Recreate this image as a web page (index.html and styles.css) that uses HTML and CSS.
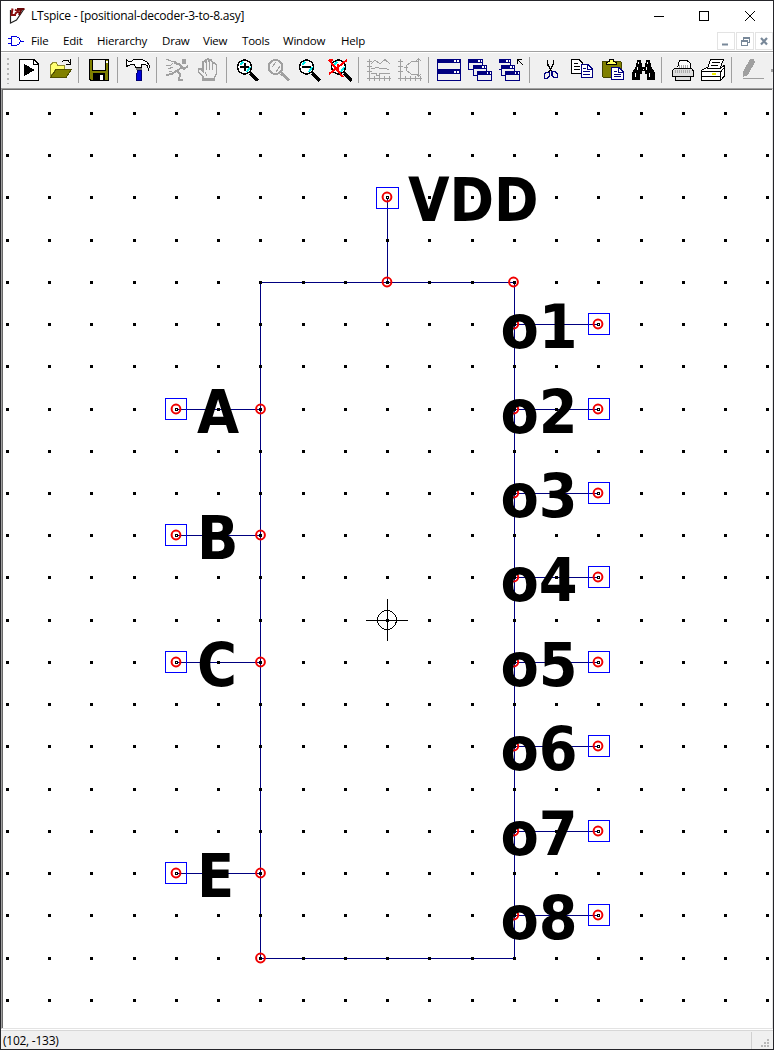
FILE: index.html
```html
<!DOCTYPE html>
<html lang="en">
<head>
<meta charset="utf-8">
<title>LTspice</title>
<link rel="stylesheet" href="styles.css">
</head>
<body>
<div class="window">
  <header class="titlebar">
    <svg class="app-icon" width="18" height="18" viewBox="0 0 18 18"><path d="M2.500 3V16L8.500 13L16 2" fill="#fff" stroke="#222" stroke-width="1.200"/><path d="M4.500 1.500L3.500 8H8M7 2.500L12 6M12 2L7 7" fill="none" stroke="#8a1010" stroke-width="2"/><path d="M9 2H16.500M13.500 2L11 8" fill="none" stroke="#6a0808" stroke-width="2"/></svg>
    <span class="title">LTspice - [positional-decoder-3-to-8.asy]</span>
    <svg class="caption" width="108" height="12" viewBox="0 0 108 12" fill="none" stroke="#000"><path d="M0 6.500H10M45.500 1.500H54.500V10.500H45.500Z" shape-rendering="crispEdges"/><path d="M91 1L101 11M101 1L91 11"/></svg>
  </header>
  <nav class="menubar">
    <svg class="gate" width="18" height="12" viewBox="0 0 18 12" fill="none" stroke="#0000e0" shape-rendering="crispEdges"><path d="M3.500 1.500H8L11 3L12.500 6L11 9L8 10.500H3.500ZM0 3.500H3M0 8.500H3M13 6.500H16"/></svg>
    <span>File</span><span>Edit</span><span>Hierarchy</span><span>Draw</span><span>View</span><span>Tools</span><span>Window</span><span>Help</span>
    <div class="mdi">
      <b><svg width="16" height="16"><path d="M4 11.500H10" stroke="#788899" stroke-width="2"/></svg></b>
      <b><svg width="16" height="16" fill="none" stroke="#788899" shape-rendering="crispEdges"><path d="M6.500 7V4.500H12.500V9.500H11M6 5.500H13M4.500 7.500H10.500V12.500H4.500ZM4 8.500H10"/></svg></b>
      <b><svg width="16" height="16"><path d="M5 5L11 11.500M11 5L5 11.500" stroke="#788899" stroke-width="2.200"/></svg></b>
    </div>
  </nav>
  <div class="toolbar">
    <i class="grip"></i>
    <svg class="ic" viewBox="0 0 24 24"><path d="M2.500 1.500H17L21.500 6V22.500H2.500Z" fill="#fff" stroke="#000"/><path d="M16.500 1.500V6.500H21.500" fill="none" stroke="#000"/><path d="M7 6L18 12L7 18Z"/></svg>
    <svg class="ic" viewBox="0 0 24 24"><path d="M2.500 18V7L5 4.500H8L10 7.500H16.500V11.500H8Z" fill="#ffff70" stroke="#908c30"/><path d="M2.500 19.500L8 11.500H23.500L18 19.500Z" fill="#808000" stroke="#505000"/><path d="M14 3.500L16 2.500H20L22 5M22.500 1V6.500H18" fill="none" stroke="#000"/></svg>
    <i class="sep"></i>
    <svg class="ic" viewBox="0 0 24 24"><path d="M2.500 1.500H21.500V22.500H4L2.500 21Z" fill="#808000" stroke="#000"/><path d="M5.500 1.500H18.500V12.500H5.500Z" fill="#f0f0f0" stroke="#000"/><path d="M6 15H18V22H6Z"/><path d="M13 17H16V22H13Z" fill="#fff"/><path d="M19 3H21V5H19Z" fill="#fff"/></svg>
    <i class="sep"></i>
    <svg class="ic" viewBox="0 0 24 24"><path d="M.500 2V8.500L5 6.500H8L10 9.500H15.500V6.500H19L21.500 8L22.500 11.500L23.500 8L21 4L16 1.500H8L5 3.500L2 3Z" fill="#fff" stroke="#000"/><path d="M10 10H16V12H10Z" fill="#777"/><path d="M11 12H15V15L16 22.500H10.500L11 15Z" fill="#0000d8" stroke="#000070"/></svg>
    <i class="sep"></i>
    <svg class="ic" viewBox="0 0 24 24" fill="none" stroke="#a0a0a0"><path d="M17 1H20V5H17Z" fill="#a0a0a0"/><path d="M9 5L14 6L17 9L12 13L15 16L14 22H18M11 13L7 16L1 17M16 8L19 11L23 8" stroke-width="2"/><path d="M1 1L6 3L11 4M1 7H6L8 5M3 11L8 9M4 14L7 13" stroke-width="1"/></svg>
    <svg class="ic" viewBox="0 0 24 24" fill="none" stroke="#a0a0a0"><path d="M7 22V19L2.500 14V11H5L7 13V4L9 3L10 4V2L12 1L13 2V3L15 2L16.500 4V5L18.500 5L20.500 7V16L18.500 19V22Z" stroke-width="1.500"/><path d="M10.500 3V12M13.500 3V12M16.500 4V12M9 14L11 18M8 20.500H18"/></svg>
    <i class="sep"></i>
    <svg class="ic" viewBox="0 0 24 24"><use href="#lens"/><path d="M5 9H14M9.500 5V13" stroke="#000" stroke-width="2"/></svg>
    <svg class="ic" viewBox="0 0 24 24" fill="none" stroke="#a0a0a0" stroke-width="2"><circle cx="9.500" cy="9" r="7"/><path d="M6 9L10 4M14 8L10 14" stroke-width="1"/><path d="M15 15L23 22.500" stroke-width="3"/></svg>
    <svg class="ic" viewBox="0 0 24 24"><use href="#lens"/><path d="M5 9H14" stroke="#000" stroke-width="2"/></svg>
    <svg class="ic" viewBox="0 0 24 24"><use href="#lens" x="1"/><path d="M1 2L15 19M19 2L1 16M1 2H5M10 6V12" stroke="#f00" stroke-width="2" fill="none"/></svg>
    <i class="sep"></i>
    <svg class="ic" viewBox="0 0 24 24" fill="none" stroke="#a0a0a0"><path d="M2.500 1V23M0 20.500H24M0 3.500H5M0 8.500H5M0 13.500H5M7.500 18V23M12.500 18V23M17.500 18V23M22.500 18V23M4 6L8 2L13 6L18 1.500L23 6M4 10H8L10 9L14 11L18 10L22 12M4 15.500H9V17.500H12V15.500H23"/></svg>
    <svg class="ic" viewBox="0 0 24 24" fill="none" stroke="#a0a0a0"><path d="M2.500 1V23M0 20.500H24M0 3.500H5M0 8.500H5M0 13.500H5M7.500 18V23M12.500 18V23M17.500 18V23M22.500 18V23M20.500 1V18M18 3L20.500 1L23 3M18 16L20.500 18L23 16M20 3L13 4L8 8V12L13 16L20 17M6 9H10"/></svg>
    <i class="sep"></i>
    <svg class="ic" viewBox="0 0 24 24"><path d="M0 1H24V23H0Z" fill="#000080"/><path d="M1 5H23V11H1ZM1 16H23V22H1Z" fill="#f0f0f0"/><path d="M17 2H19V4H17ZM20 2H22V4H20ZM17 13H19V15H17ZM20 13H22V15H20Z" fill="#fff"/></svg>
    <svg class="ic" viewBox="0 0 24 24"><use href="#cascade"/></svg>
    <svg class="ic" viewBox="0 0 24 24"><use href="#cascade" x="-3"/><path d="M18 1.500H23M18.500 1V6M18 1L24 7" stroke="#000" fill="none"/></svg>
    <i class="sep"></i>
    <svg class="ic" viewBox="0 0 24 24" fill="none"><path d="M9.500 2V6L14 14M15.500 2V6L11 14" stroke="#000" stroke-width="1.500"/><path d="M8 14.500H11.500V18L9.500 20.500H6.500V16.500ZM14 13.500H17L19.500 16V19.500H16L14 17Z" stroke="#000080" stroke-width="1.500"/></svg>
    <svg class="ic" viewBox="0 0 24 24"><path d="M2.500 1.500H10L13.500 5V15.500H2.500Z" fill="#fff" stroke="#000"/><path d="M5 5.500H9M5 8.500H11M5 11.500H11" stroke="#000"/><path d="M12.500 6.500H19L23.500 11V19.500H12.500Z" fill="#fff" stroke="#000080"/><path d="M18.500 7V11.500H23M14 10.500H17M14 13.500H21M14 16.500H21" fill="none" stroke="#000080"/></svg>
    <svg class="ic" viewBox="0 0 24 24"><path d="M3 3H20L21 4V19H3L2 18V4Z" fill="#808000" stroke="#444400"/><path d="M6.500 6.500V4.500L9 3.500L10 1.500H13L14 3.500L16.500 4.500V6.500Z" fill="#ffff60" stroke="#000"/><path d="M11.500 9.500H19L23.500 14V21.500H11.500Z" fill="#fff" stroke="#000080"/><path d="M18.500 10V14.500H23M14 13.500H17M14 16.500H21M14 18.500H21" fill="none" stroke="#000080"/></svg>
    <svg class="ic" viewBox="0 0 24 24"><path d="M6 2H10V5H11V9H14V5H15V2H19V5H20V8L24 15V22H16V16H14V13H11V16H9V22H1V15L5 8V5H6Z"/><path d="M7.500 4V6M16.500 4V6M6.500 9V12M15.500 9V12M4.500 15V19M18.500 15V19M11.500 11H13" stroke="#fff"/></svg>
    <i class="sep"></i>
    <svg class="ic" viewBox="0 0 24 24"><path d="M7.500 9.500L9.500 2.500H17L20.500 5.500V11" fill="#fff" stroke="#000"/><path d="M4.500 10.500H21.500L23.500 13V18.500H20.500V22.500H5.500V18.500H2.500V12.500Z" fill="#ddd" stroke="#000"/><path d="M6 18.500H20" stroke="#000"/><path d="M9 8H19M5 13H21" stroke="#aaa" stroke-dasharray="1 1" stroke-width="3"/></svg>
    <svg class="ic" viewBox="0 0 24 24"><path d="M.500 12.500L5.500 9.500H20L23.500 7.500V18L19.500 22.500H.500Z" fill="#fff" stroke="#000"/><path d="M6.500 10.500L9.500 1.500H22.500L19 10.500Z" fill="#fff" stroke="#000"/><path d="M11 4.500H19M10 7.500H17M1 13.500H19.500V22M19.500 14L23 10M1 18.500H19" fill="none" stroke="#000"/><path d="M11 16H15" stroke="#ee0" stroke-width="2"/></svg>
    <i class="sep"></i>
    <svg class="ic" viewBox="0 0 24 24"><path d="M3 19V14L10 1H14L15 4L8 17Z" fill="#a0a0a0"/><path d="M3 20.500H24" stroke="#a0a0a0"/></svg>
    <i class="more"></i>
  </div>
  <main class="canvas"><svg id="schematic" width="770" height="937" viewBox="3 91 770 937"></svg></main>
  <footer class="status"><span>(102, -133)</span><svg width="22" height="17" shape-rendering="crispEdges"><path d="M.500 0V17" stroke="#d0d0d0"/><path d="M16 7h2v2h-2zM13 10h2v2h-2zM16 10h2v2h-2zM10 13h2v2h-2zM13 13h2v2h-2zM16 13h2v2h-2z" fill="#b8b8b8"/></svg></footer>
</div>
<svg class="defs" width="0" height="0"><defs>
  <g id="lens"><path d="M15 15L23 22.500" stroke="#000" stroke-width="3.500"/><circle cx="9.500" cy="9" r="7" fill="#fff" stroke="#000" stroke-width="1.500"/><path d="M5 7L8 4M15 9L12 14" stroke="#0ee" stroke-width="2"/></g>
  <g id="cascade">
    <path d="M0 1H15V12H0Z" fill="#000080"/><path d="M1 5H14V11H1Z" fill="#f0f0f0"/>
    <path d="M5 7H19V18H5Z" fill="#000080"/><path d="M6 11H18V17H6Z" fill="#f0f0f0"/>
    <path d="M9 13H24V23H9Z" fill="#000080"/><path d="M10 17H23V22H10Z" fill="#f0f0f0"/>
    <path d="M10 2H12V4H10ZM13 2H14V4H13ZM14 8H16V10H14ZM17 8H18V10H17ZM19 14H20V16H19ZM22 14H23V16H22Z" fill="#fff"/>
  </g>
</defs></svg>
<script src="schematic.js"></script>
</body>
</html>
```
FILE: styles.css
```css
* { box-sizing: border-box; }
body { margin: 0; background: #fff; font-family: "Open Sans", "Noto Sans", sans-serif; font-size: 12px; color: #000; }
.window { width: 774px; height: 1050px; border: 1px solid #25252a; display: flex; flex-direction: column; background: #fff; }
.titlebar { height: 29px; display: flex; align-items: center; padding: 0 11px 0 7px; }
.title { margin-left: 5px; letter-spacing: -0.23px; white-space: nowrap; }
.caption { margin-left: auto; }
.menubar { height: 21px; display: grid; grid-template-columns: 29px 32px 34px 65px 41px 39px 41px 58px 40px 1fr; align-items: center; padding-left: 1px; font-size: 11.5px; letter-spacing: -0.2px; white-space: nowrap; }
.gate { margin-left: 6px; }
.mdi { display: flex; justify-content: flex-end; }
.mdi b { width: 18px; height: 18px; border: 1px solid #e3e3e3; display: block; margin-left: 1px; }
.mdi svg { display: block; }
.toolbar { height: 37px; background: #f0f0f0; border-top: 1px solid #a0a0a0; box-shadow: inset 0 1px #fff; display: flex; align-items: center; gap: 7px; padding-left: 5px; overflow: hidden; }
.ic { width: 24px; height: 24px; flex: none; shape-rendering: crispEdges; }
.grip { width: 4px; height: 27px; background: radial-gradient(circle at 2px 2px, #b5b5b5 1px, transparent 1.3px) 0 0 / 4px 5px; flex: none; }
.sep { width: 1px; height: 26px; margin: 0 1px 0 -1px; background: #a0a0a0; flex: none; }
.more { width: 3px; height: 3px; background: #a0a0a0; flex: none; }
.canvas { height: 941px; border-top: 1px solid #a0a0a0; border-left: 1px solid #a0a0a0; border-bottom: 1px solid #e3e3e3; border-right: 1px solid #e3e3e3; box-shadow: inset 1px 1px #696969; overflow: hidden; padding: 2px 0 0 1px; }
.canvas svg { display: block; }
.status { flex: 1; margin-top: 1px; background: #f0f0f0; border-top: 1px solid #d7d7d7; display: flex; align-items: center; justify-content: space-between; padding-left: 2px; font-size: 12px; letter-spacing: -0.25px; }
.grid-dot { fill: #000; shape-rendering: crispEdges; }
.wire { fill: none; stroke: #000080; shape-rendering: crispEdges; }
.pin-box { fill: none; stroke: #0000ff; shape-rendering: crispEdges; }
.node { fill: none; stroke: #f00000; stroke-width: 2; }
.pin-hole { fill: #fff; }
.origin { fill: none; stroke: #000; shape-rendering: crispEdges; }
.label { font: bold 60.5px "DejaVu Sans Condensed", "DejaVu Sans", sans-serif; font-stretch: condensed; }
.defs { position: absolute; }
```
FILE: schematic.js
```javascript
const svg = document.getElementById('schematic');
const gx = k => Math.round(7 + 42.24 * k);
const gy = k => Math.round(112.95 + 42.23 * k);
function add(tag, cls, attrs, text) {
  const el = document.createElementNS('http://www.w3.org/2000/svg', tag);
  el.setAttribute('class', cls);
  for (const k in attrs) el.setAttribute(k, attrs[k]);
  if (text) el.textContent = text;
  svg.appendChild(el);
}
const wire = (x1, y1, x2, y2) => add('path', 'wire', { d: `M${x1 + .5} ${y1 + .5}L${x2 + .5} ${y2 + .5}` });
const node = (x, y) => add('circle', 'node', { cx: x, cy: y, r: 4.4 });

// Symbol outline
const L = gx(6), R = gx(12), T = gy(4), B = gy(20);
wire(L, T, R, T); wire(L, B, R, B); wire(L, T, L, B); wire(R, T, R, B);

// Pins: [outer x, outer y, body x, body y, label, label x, horizontal stretch]
const pins = [[gx(9), gy(2), gx(9), T, 'VDD', 408, 0.986]];
[['A', 7], ['B', 10], ['C', 13], ['E', 18]].forEach(([n, k]) => pins.push([gx(4), gy(k), L, gy(k), n, 197, 1]));
for (let i = 0; i < 8; i++) pins.push([gx(14), gy(5 + 2 * i), R, gy(5 + 2 * i), 'o' + (i + 1), 500.5, 1.025]);
for (const p of pins) wire(p[0], p[1], p[2], p[3]);

for (let i = 0; i < 19; i++) for (let j = 0; j < 22; j++) add('rect', 'grid-dot', { x: gx(i) - 1, y: gy(j) - 1, width: 3, height: 3 });

for (const [x, y, bx, by] of pins) {
  const dx = x > L ? 9.5 : 10.5, dy = y < T ? 9.5 : 10.5;
  add('rect', 'pin-box', { x: x - (x === gx(9) ? 10.5 : dx), y: y - dy, width: x === gx(9) ? 22 : 21, height: 21 });
  node(x, y);
  add('rect', 'grid-dot', { x: x - 1, y: y - 1, width: 3, height: 3 });
  add('rect', 'pin-hole', { x, y, width: 1, height: 1 });
  node(bx === L ? bx + .5 : bx === R ? bx - .2 : bx, by);
}
node(R - .5, T); node(L + .5, B);

// Origin marker
add('circle', 'origin', { cx: gx(9), cy: gy(12), r: 9.5 });
add('path', 'origin', { d: `M${gx(9) - 21} ${gy(12) + .5}h42M${gx(9) + .5} ${gy(12) - 21}v42` });

for (const p of pins) add('text', 'label', { transform: `translate(${p[5]} ${p[1] + 24}) scale(${p[6]} 1)` }, p[4]);
```
